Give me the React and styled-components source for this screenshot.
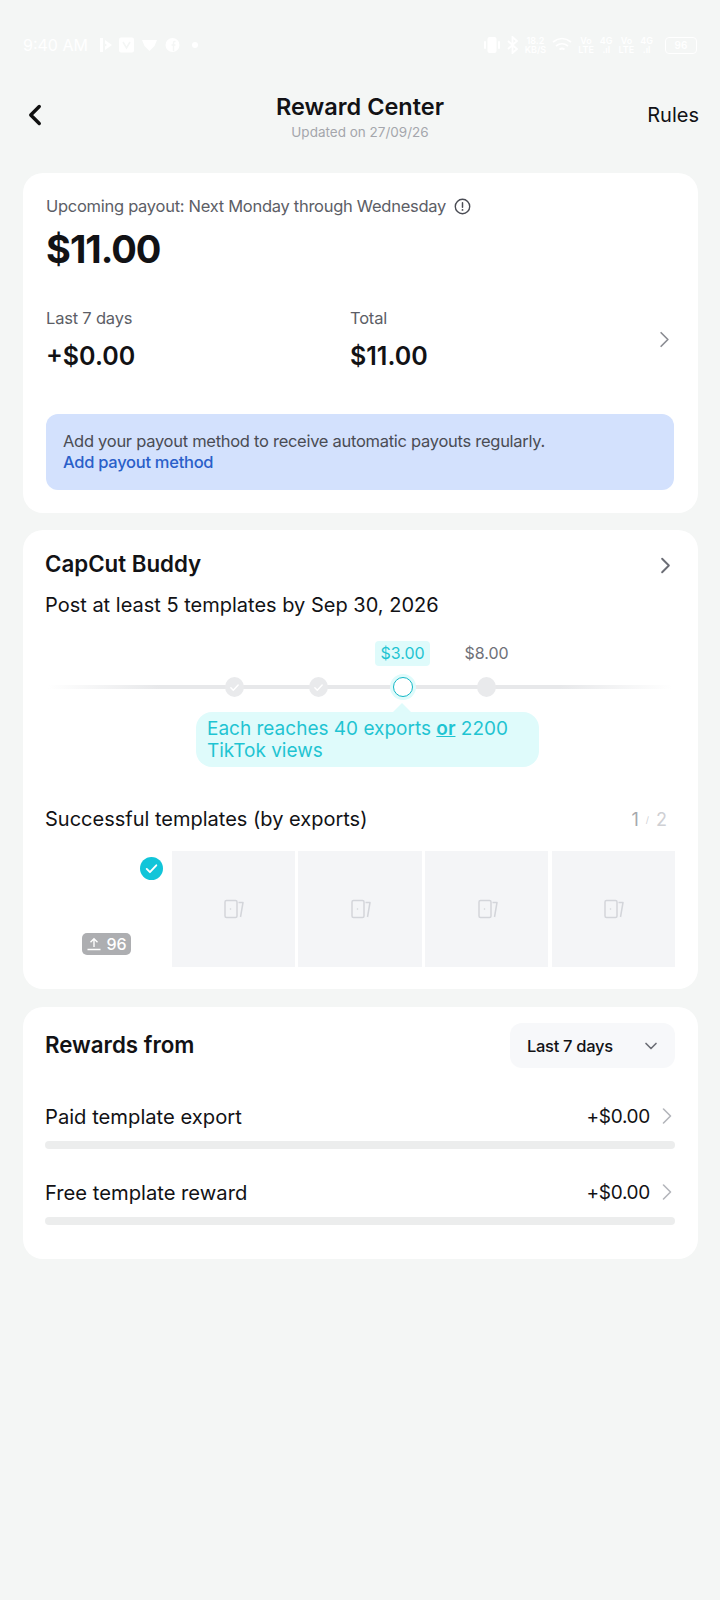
import React from "react";
import styled, { createGlobalStyle } from "styled-components";
import { FiChevronLeft, FiChevronRight, FiChevronDown } from "react-icons/fi";

const GlobalStyle = createGlobalStyle`
	html, body {
		margin: 0;
		padding: 0;
		background: #f4f6f5;
	}
	* {
		box-sizing: border-box;
	}
	body {
		font-family: Inter, "Noto Sans", sans-serif;
		color: #121215;
	}
`;

const milestones = [
	{ state: "done", label: "" },
	{ state: "done", label: "" },
	{ state: "active", label: "$3.00" },
	{ state: "todo", label: "$8.00" },
];

const rewards = [
	{ name: "Paid template export", amount: "+$0.00" },
	{ name: "Free template reward", amount: "+$0.00" },
];

const Check = ({ size, color }) => (
	<svg width={size} height={size} viewBox="0 0 16 16" fill="none">
		<path d="M3.5 8.4l3 3 6-6.4" stroke={color} strokeWidth="1.8" strokeLinecap="round" strokeLinejoin="round" />
	</svg>
);

const TemplateIcon = () => (
	<svg width="20" height="20" viewBox="0 0 20 20" fill="none" stroke="#d3d5da" strokeWidth="1.5">
		<rect x="1" y="1.5" width="12" height="17" rx="1.5" />
		<circle cx="6.5" cy="10" r="0.8" fill="#d3d5da" stroke="none" />
		<path d="M14.5 3.5H19L16.5 18" strokeLinejoin="round" />
	</svg>
);

const AppIcons = () => (
	<svg width="100" height="16" viewBox="0 0 100 16" fill="#fff">
		<path d="M1 1h3v14H1zM6 3l7 5-7 5V9.5l2-1.5-2-1.5z" />
		<rect x="20" y="0.5" width="15" height="15" rx="2" />
		<path d="M24 5l3.5 6L31 5" fill="none" stroke="#f4f6f5" strokeWidth="1.6" />
		<path d="M43 3h15l-2.5 6-5 5-5-5z" />
		<circle cx="73.5" cy="8" r="7" />
		<path d="M74.5 14V8h2M76.5 4.5h-1a1 1 0 0 0-1 1V8h-2" fill="none" stroke="#f4f6f5" strokeWidth="1.4" />
		<circle cx="96" cy="8" r="3" />
	</svg>
);

const VibrateIcon = () => (
	<svg width="18" height="18" viewBox="0 0 18 18" fill="#fff">
		<rect x="4.5" y="1" width="9" height="16" rx="2" />
		<rect x="1" y="5" width="2" height="8" rx="1" />
		<rect x="15" y="5" width="2" height="8" rx="1" />
	</svg>
);

const BluetoothIcon = () => (
	<svg width="12" height="18" viewBox="0 0 12 18" fill="none" stroke="#fff" strokeWidth="1.8">
		<path d="M1 5l9 8-4.500 4V1L10 5l-9 8" />
	</svg>
);

const WifiIcon = () => (
	<svg width="20" height="16" viewBox="0 0 20 16" fill="none" stroke="#fff" strokeWidth="1.7">
		<path d="M1 5q9-7 18 0M4 9q6-4.500 12 0M7.500 12.500q2.500-2 5 0" />
	</svg>
);

const App = () => {
	return (
		<Page>
			<GlobalStyle />
			<StatusBar>
				<StatusLeft>
					<StatusTime>9:40 AM</StatusTime>
					<AppIcons />
				</StatusLeft>
				<StatusRight>
					<VibrateIcon />
					<BluetoothIcon />
					<StackedText>
						<span>18.2</span>
						<span>KB/S</span>
					</StackedText>
					<WifiIcon />
					<StackedText>
						<span>Vo</span>
						<span>LTE</span>
					</StackedText>
					<StackedText>
						<span>4G</span>
						<span>.ıl</span>
					</StackedText>
					<StackedText>
						<span>Vo</span>
						<span>LTE</span>
					</StackedText>
					<StackedText>
						<span>4G</span>
						<span>.ıl</span>
					</StackedText>
					<Battery>96</Battery>
				</StatusRight>
			</StatusBar>

			<Header>
				<BackButton>
					<FiChevronLeft size={34} strokeWidth={2.4} />
				</BackButton>
				<TitleBlock>
					<Title>Reward Center</Title>
					<Updated>Updated on 27/09/26</Updated>
				</TitleBlock>
				<RulesLink>Rules</RulesLink>
			</Header>

			<Cards>
				<PayoutCard>
					<PayoutLabel>
						Upcoming payout: Next Monday through Wednesday
						<svg width="17" height="17" viewBox="0 0 16 16" fill="none">
							<circle cx="8" cy="8" r="6.8" stroke="#4a4c54" strokeWidth="1.3" />
							<path d="M8 4.4v4.4" stroke="#4a4c54" strokeWidth="1.4" strokeLinecap="round" />
							<circle cx="8" cy="11.2" r="0.9" fill="#4a4c54" />
						</svg>
					</PayoutLabel>
					<BigAmount>$11.00</BigAmount>
					<StatsRow>
						<Stat>
							<StatLabel>Last 7 days</StatLabel>
							<StatValue>+$0.00</StatValue>
						</Stat>
						<Stat>
							<StatLabel>Total</StatLabel>
							<StatValue>$11.00</StatValue>
						</Stat>
						<StatsChevron>
							<FiChevronRight size={27} strokeWidth={1.5} />
						</StatsChevron>
					</StatsRow>
					<Banner>
						<BannerText>Add your payout method to receive automatic payouts regularly.</BannerText>
						<BannerLink>Add payout method</BannerLink>
					</Banner>
				</PayoutCard>

				<BuddyCard>
					<CardHead>
						<CardTitle>CapCut Buddy</CardTitle>
						<HeadChevron>
							<FiChevronRight size={27} strokeWidth={1.7} color="#6b6d75" />
						</HeadChevron>
					</CardHead>
					<Goal>Post at least 5 templates by Sep 30, 2026</Goal>

					<Milestones>
						<Track />
						{milestones.map((m, i) => (
							<Milestone key={i}>
								<MilestoneLabel $active={m.state === "active"} $hidden={!m.label}>
									{m.label || "$0.00"}
								</MilestoneLabel>
								<Node $state={m.state}>
									{m.state === "done" && <Check size={13} color="#fff" />}
								</Node>
							</Milestone>
						))}
					</Milestones>

					<Tip>
						Each reaches 40 exports <TipStrong>or</TipStrong> 2200 TikTok views
					</Tip>

					<SectionHead>
						<SectionTitle>Successful templates (by exports)</SectionTitle>
						<Pager>
							<PagerCurrent>1</PagerCurrent>
							<PagerSlash>/</PagerSlash>
							<span>2</span>
						</Pager>
					</SectionHead>

					<Thumbs>
						<DoneThumb>
							<ThumbCheck>
								<Check size={17} color="#fff" />
							</ThumbCheck>
							<ExportBadge>
								<svg width="16" height="16" viewBox="0 0 16 16" fill="none" stroke="#fff" strokeWidth="1.4">
									<path d="M8 11V3M4.5 6.2L8 2.8l3.5 3.4M1.5 13.5h13" />
								</svg>
								96
							</ExportBadge>
						</DoneThumb>
						{[0, 1, 2, 3].map((i) => (
							<EmptyThumb key={i}>
								<TemplateIcon />
							</EmptyThumb>
						))}
					</Thumbs>
				</BuddyCard>

				<RewardsCard>
					<RewardsHead>
						<CardTitle>Rewards from</CardTitle>
						<RangeSelect>
							Last 7 days
							<FiChevronDown size={20} strokeWidth={2} color="#6b6d75" />
						</RangeSelect>
					</RewardsHead>
					{rewards.map((r) => (
						<RewardRow key={r.name}>
							<RewardLine>
								<RewardName>{r.name}</RewardName>
								<RewardAmount>
									{r.amount}
									<FiChevronRight size={28} strokeWidth={1.4} color="#b4b6bb" />
								</RewardAmount>
							</RewardLine>
							<RewardBar />
						</RewardRow>
					))}
				</RewardsCard>
			</Cards>
		</Page>
	);
};

const Page = styled.div`
	width: 720px;
	min-height: 1600px;
	background: #f4f6f5;
`;

const StatusBar = styled.div`
	height: 60px;
	padding: 30px 23px 0 23px;
	display: flex;
	justify-content: space-between;
	align-items: center;
`;

const StatusLeft = styled.div`
	display: flex;
	align-items: center;
	gap: 11px;
`;

const StatusTime = styled.span`
	color: #fff;
	font-size: 16px;
`;

const StatusRight = styled.div`
	display: flex;
	align-items: center;
	gap: 6px;
`;

const StackedText = styled.span`
	display: flex;
	flex-direction: column;
	align-items: center;
	color: #fff;
	font-size: 9px;
	line-height: 9px;
	font-weight: 600;
`;

const Battery = styled.span`
	width: 32px;
	height: 17px;
	margin-left: 6px;
	border: 1.5px solid #fff;
	border-radius: 4px;
	color: #fff;
	font-size: 10px;
	line-height: 14px;
	font-weight: 600;
	text-align: center;
`;

const Header = styled.header`
	height: 113px;
	position: relative;
	display: flex;
	justify-content: center;
	padding-top: 32px;
`;

const BackButton = styled.div`
	position: absolute;
	left: 18px;
	top: 38px;
	display: flex;
	color: #111;
`;

const TitleBlock = styled.div`
	text-align: center;
`;

const Title = styled.h1`
	margin: 0;
	font-size: 23.5px;
	line-height: 30px;
	font-weight: 600;
	color: #121215;
`;

const Updated = styled.div`
	font-size: 13.5px;
	line-height: 18px;
	margin-top: 1px;
	color: #a4a6ac;
`;

const RulesLink = styled.div`
	position: absolute;
	right: 21px;
	top: 42px;
	font-size: 20px;
	line-height: 26px;
	color: #121215;
`;

const Cards = styled.div`
	padding: 0 22px 0 23px;
	display: flex;
	flex-direction: column;
	gap: 17px;
`;

const Card = styled.section`
	background: #fff;
	border-radius: 20px;
`;

const PayoutCard = styled(Card)`
	height: 340px;
	padding: 21px 24px 21px 23px;
`;

const PayoutLabel = styled.div`
	display: flex;
	align-items: center;
	gap: 8px;
	font-size: 16.5px;
	letter-spacing: -0.28px;
	line-height: 24px;
	color: #5c5e66;
`;

const BigAmount = styled.div`
	margin-top: 8px;
	font-size: 38px;
	line-height: 46px;
	font-weight: 700;
	letter-spacing: -1px;
	color: #121215;
`;

const StatsRow = styled.div`
	margin-top: 34px;
	margin-right: -4px;
	display: grid;
	grid-template-columns: 304px 1fr 27px;
	align-items: center;
`;

const Stat = styled.div`
	display: flex;
	flex-direction: column;
	gap: 10px;
`;

const StatLabel = styled.div`
	font-size: 16.5px;
	letter-spacing: -0.2px;
	line-height: 24px;
	color: #5c5e66;
`;

const StatValue = styled.div`
	font-size: 25px;
	line-height: 32px;
	font-weight: 600;
	color: #121215;
`;

const StatsChevron = styled.div`
	display: flex;
	color: #8a8c92;
`;

const Banner = styled.div`
	margin-top: 42px;
	height: 76px;
	padding: 17px 17px;
	border-radius: 12px;
	background: #d3e1fd;
`;

const BannerText = styled.div`
	font-size: 16.5px;
	letter-spacing: -0.28px;
	line-height: 21px;
	color: #4a4c54;
`;

const BannerLink = styled.div`
	font-size: 16.5px;
	letter-spacing: -0.28px;
	line-height: 21px;
	font-weight: 500;
	color: #2a5fc9;
`;

const BuddyCard = styled(Card)`
	height: 459px;
	padding: 20px 23px 20px 22px;
`;

const CardHead = styled.div`
	display: flex;
	justify-content: space-between;
	align-items: center;
	height: 30px;
`;

const HeadChevron = styled.div`
	display: flex;
	margin-right: -4px;
`;

const CardTitle = styled.h2`
	margin: 0;
	padding-bottom: 2px;
	font-size: 22.3px;
	line-height: 30px;
	font-weight: 600;
	color: #121215;
`;

const Goal = styled.div`
	margin-top: 11px;
	font-size: 20px;
	line-height: 28px;
	color: #121215;
`;

const Milestones = styled.div`
	position: relative;
	margin-top: 22px;
	height: 56px;
	display: flex;
	padding-left: 159px;
	gap: 23px;
`;

const Track = styled.div`
	position: absolute;
	left: 3px;
	right: 3px;
	top: 44px;
	height: 4px;
	background: linear-gradient(90deg, #ffffff, #e7e8ea 18%, #e7e8ea 82%, #ffffff);
`;

const Milestone = styled.div`
	position: relative;
	width: 61px;
	display: flex;
	flex-direction: column;
	align-items: center;
	gap: 11px;
`;

const MilestoneLabel = styled.div`
	visibility: ${(props) => (props.$hidden ? "hidden" : "visible")};
	height: 25px;
	padding: 0 5.5px;
	border-radius: 4px;
	font-size: 16px;
	line-height: 25px;
	color: ${(props) => (props.$active ? "#1fc4d2" : "#6f7178")};
	background: ${(props) => (props.$active ? "#dffbfb" : "transparent")};
`;

const Node = styled.div`
	width: ${(props) => (props.$state === "active" ? "20px" : "19px")};
	height: 20px;
	border-radius: 50%;
	display: flex;
	align-items: center;
	justify-content: center;
	background: ${(props) => (props.$state === "active" ? "#fff" : "#e9eaec")};
	border: ${(props) => (props.$state === "active" ? "1.5px solid #12b7c6" : "none")};
	box-shadow: ${(props) => (props.$state === "active" ? "0 0 0 3px #dffbfb" : "none")};
`;

const Tip = styled.div`
	position: relative;
	width: 343px;
	height: 55px;
	margin: 15px 0 0 151px;
	padding: 6px 11px;
	border-radius: 16px;
	background: #dffbfb;
	font-size: 19px;
	line-height: 22px;
	color: #1fc4d2;

	&::before {
		content: "";
		position: absolute;
		left: 197px;
		top: -9px;
		border-left: 9px solid transparent;
		border-right: 9px solid transparent;
		border-bottom: 9px solid #dffbfb;
	}
`;

const TipStrong = styled.span`
	font-weight: 600;
	text-decoration: underline;
`;

const SectionHead = styled.div`
	margin-top: 37px;
	height: 30px;
	display: flex;
	justify-content: space-between;
	align-items: center;
`;

const SectionTitle = styled.div`
	font-size: 20px;
	line-height: 28px;
	color: #121215;
`;

const Pager = styled.div`
	display: flex;
	align-items: center;
	gap: 7px;
	padding-right: 8px;
	font-size: 18px;
	color: #cfd0d4;
`;

const PagerCurrent = styled.span`
	color: #a6a8ad;
`;

const PagerSlash = styled.span`
	font-size: 9px;
`;

const Thumbs = styled.div`
	margin-top: 17px;
	display: grid;
	grid-template-columns: repeat(5, 1fr);
	gap: 3.5px;
	height: 116px;
`;

const DoneThumb = styled.div`
	position: relative;
	background: #fff;
`;

const ThumbCheck = styled.div`
	position: absolute;
	top: 6px;
	right: 5px;
	width: 23px;
	height: 23px;
	border-radius: 50%;
	background: #11c5d9;
	display: flex;
	align-items: center;
	justify-content: center;
`;

const ExportBadge = styled.div`
	position: absolute;
	left: 37px;
	bottom: 12px;
	width: 49px;
	height: 22px;
	border-radius: 5px;
	background: #adaeb1;
	display: flex;
	align-items: center;
	justify-content: center;
	gap: 4px;
	color: #fff;
	font-size: 16px;
	font-weight: 500;
`;

const EmptyThumb = styled.div`
	background: #f4f5f7;
	padding-left: 2px;
	display: flex;
	align-items: center;
	justify-content: center;
`;

const RewardsCard = styled(Card)`
	height: 252px;
	margin-top: 1px;
	padding: 16px 23px 16px 22px;
`;

const RewardsHead = styled.div`
	display: flex;
	justify-content: space-between;
	align-items: center;
	height: 45px;
	margin-bottom: 29px;
`;

const RangeSelect = styled.div`
	width: 165px;
	height: 45px;
	padding: 0 14px 0 17px;
	border-radius: 12px;
	background: #f7f8fa;
	display: flex;
	align-items: center;
	justify-content: space-between;
	font-size: 16.5px;
	letter-spacing: -0.3px;
	font-weight: 500;
	color: #121215;
`;

const RewardRow = styled.div`
	margin-bottom: 24px;
`;

const RewardLine = styled.div`
	height: 36px;
	padding-top: 2px;
	display: flex;
	justify-content: space-between;
	align-items: center;
	margin-bottom: 8px;
`;

const RewardName = styled.div`
	font-size: 20.2px;
	color: #121215;
`;

const RewardAmount = styled.div`
	display: flex;
	align-items: center;
	gap: 3px;
	margin-right: -6px;
	font-size: 19px;
	letter-spacing: -0.3px;
	color: #121215;
`;

const RewardBar = styled.div`
	height: 8px;
	border-radius: 4px;
	background: #eceded;
`;

export default App;
